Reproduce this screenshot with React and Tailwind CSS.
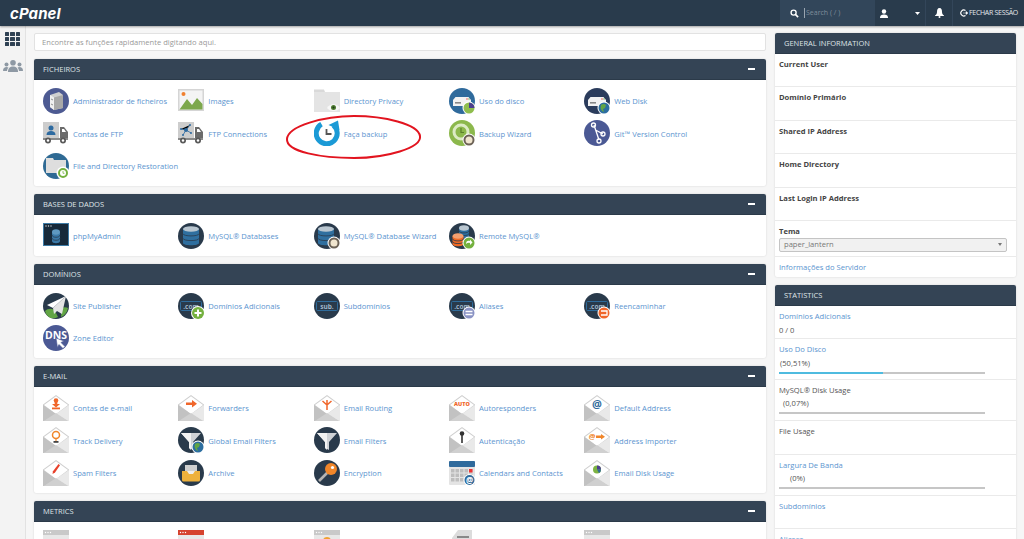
import React from "react";

const F = "font-['Open_Sans',sans-serif]";
const NAVY = "#293a4b";

const S = ({ children }) => (
  <svg viewBox="0 0 26 26" width="26" height="26" className="shrink-0 block">{children}</svg>
);
const C = ({ f }) => <circle cx="13" cy="13" r="13" fill={f} />;
const B = ({ f = "#fff", children, cx = 20, cy = 20, r = 5.5 }) => (
  <g>
    <circle cx={cx} cy={cy} r={r + 1} fill="#fff" />
    <circle cx={cx} cy={cy} r={r} fill={f} />
    {children}
  </g>
);

const Env = ({ children }) => (
  <S>
    <path d="M0 9.500 13 0l13 9.500V26H0Z" fill="#cfcfcf" />
    <path d="M1 10 13 1.200 25 10 13 19Z" fill="#fff" />
    <path d="M0 10 13 19 1 26H0Z" fill="#c2c2c2" />
    <path d="M26 10 13 19l12 7h1Z" fill="#e9e9e9" />
    <path d="M1 26 13 18l12 8Z" fill="#d0d0d0" />
    {children}
  </S>
);

const Server = ({ y = 9 }) => (
  <g>
    <path d={`M4 ${y + 3} 6.500 ${y}h13l2.500 3v6H4Z`} fill="#f2f2f2" />
    <rect x="6" y={y + 5} width="6" height="1.600" fill="#888" />
    <circle cx="18" cy={y + 2} r=".7" fill="#e33" />
    <circle cx="20" cy={y + 2} r=".7" fill="#6a4" />
  </g>
);

const Globe = () => (
  <g>
    <B f="#2c6ea0" />
    <path d="M17 17c2-1.500 4-1 5 0l-1 3-2 1 1 3-2-1-1.500-3Z" fill="#62a544" />
  </g>
);

const Db = ({ x = 13, y = 6, c = "#2f6f9f", top = "#b9c6d0", w = 8, h = 14 }) => (
  <g>
    <path d={`M${x - w} ${y}v${h}c0 3 ${2 * w} 3 ${2 * w} 0v-${h}Z`} fill={c} />
    <ellipse cx={x} cy={y} rx={w} ry="2.800" fill={top} />
    <path d={`M${x - w} ${y + h / 3}c0 3 ${2 * w} 3 ${2 * w} 0`} fill="none" stroke={NAVY} strokeWidth=".8" />
    <path d={`M${x - w} ${y + (2 * h) / 3}c0 3 ${2 * w} 3 ${2 * w} 0`} fill="none" stroke={NAVY} strokeWidth=".8" />
  </g>
);

const Truck = ({ children }) => (
  <S>
    <rect x="0" y="2" width="16" height="16" fill="#cdcdcd" />
    <path d="M17 7h4l4 5v7H17Z" fill="#6b6b6b" />
    <path d="M19 9h2l2 3h-4Z" fill="#fff" />
    <rect x="0" y="18" width="25" height="2" fill="#8a8a8a" />
    <circle cx="5" cy="20.500" r="3" fill="#5a5a5a" />
    <circle cx="5" cy="20.500" r="1.200" fill="#fff" />
    <circle cx="20" cy="20.500" r="3" fill="#5a5a5a" />
    <circle cx="20" cy="20.500" r="1.200" fill="#fff" />
    {children}
  </S>
);

const Com = ({ t = ".com", children, fs = 6.5 }) => (
  <S>
    <C f={NAVY} />
    <rect x="2.500" y="8.500" width="21" height="9" rx="1" fill="none" stroke="#2f6c9c" strokeWidth="1" />
    <text x="13" y="15.500" textAnchor="middle" fontSize={fs} fontWeight="700" fill="#9fb6c9" fontFamily="Open Sans, sans-serif">{t}</text>
    {children}
  </S>
);

const Funnel = ({ children }) => (
  <>
    <path d="M3 6h20l-8 9v8l-4-2v-6Z" fill="#cfd2d6" />
    <path d="M3 6h10v17l-2-2v-6Z" fill="#f2f2f2" />
    {children}
  </>
);

const Win = ({ f = "#c9c9c9", children }) => (
  <S>
    <rect width="26" height="24" y="0" rx="1" fill="#e8e8e8" />
    <rect width="26" height="5" fill={f} />
    <circle cx="2.500" cy="2.500" r=".7" fill="#fff" />
    <circle cx="5" cy="2.500" r=".7" fill="#fff" />
    <circle cx="7.500" cy="2.500" r=".7" fill="#fff" />
    {children}
  </S>
);

const I = {
  file: (
    <S>
      <C f="#4d5a92" />
      <path d="M7 7 16 4l4 3v13l-9 2-4-3Z" fill="#cfcfcf" />
      <path d="M7 7l4 2.500V22l-4-3Z" fill="#f0f0f0" />
      <path d="M11 9.500 20 7v13l-9 2Z" fill="#a8a8a8" />
      <path d="M8 11l2 1M8 16l2 1" stroke="#777" strokeWidth=".8" />
    </S>
  ),
  images: (
    <S>
      <rect y="1" width="26" height="22" fill="#d5d5d5" />
      <rect x="1.500" y="2.500" width="23" height="19" fill="#f4f4f4" />
      <circle cx="5.500" cy="6" r="2" fill="#f08030" />
      <path d="M1.500 21.500 9 11l5 6 5-7 5.500 6v5.500Z" fill="#7da84c" />
    </S>
  ),
  privacy: (
    <S>
      <path d="M0 5V1.500h10L11 4h15v20H0Z" fill="#d9d9d9" />
      <path d="M0 4h26v20H0Z" fill="#e4e4e4" />
      <path d="M13 20c3-5 10-5 13 0-3 4-10 4-13 0Z" fill="#f7f7f7" />
      <circle cx="19.500" cy="19.500" r="2.500" fill="#4c7a30" />
      <circle cx="19.500" cy="19.500" r="1" fill="#1e3a16" />
    </S>
  ),
  disk: (
    <S>
      <C f="#2f6a9c" />
      <Server />
      <B f="#8fbd4d"><path d="M20 20v-5.500a5.500 5.500 0 0 1 5.500 5.500Z" fill="#4d3f8f" /></B>
    </S>
  ),
  webdisk: (
    <S>
      <C f="#2b3c5c" />
      <Server />
      <Globe />
    </S>
  ),
  ftp: (
    <Truck>
      <circle cx="8" cy="8" r="2.500" fill="#2d6aa0" />
      <path d="M3.500 15c0-3 2-4 4.500-4s4.500 1 4.500 4Z" fill="#2d6aa0" />
    </Truck>
  ),
  conn: (
    <Truck>
      <g stroke="#2d6aa0" strokeWidth=".8">
        <path d="M3 9l5 1 4-5M8 10l-3 5M8 10l5 3" />
      </g>
      <g fill="#2d6aa0">
        <circle cx="8" cy="10" r="2" />
        <circle cx="3" cy="9" r="1" />
        <circle cx="12" cy="5" r="1" />
        <circle cx="5" cy="15" r="1" />
        <circle cx="13" cy="13" r="1" />
      </g>
    </Truck>
  ),
  backup: (
    <S>
      <path d="M19.500 5.300A10.500 10.500 0 1 1 7.500 4.200" fill="none" stroke="#1b9ad6" strokeWidth="5" />
      <path d="M14.500 5 24 0.500l1.500 9.500Z" fill="#1b9ad6" />
      <path d="M12.500 9v5h5" fill="none" stroke="#555" strokeWidth="1.800" />
    </S>
  ),
  wizard: (
    <S>
      <C f="#8cb84c" />
      <circle cx="12" cy="12" r="7" fill="none" stroke="#dcebc4" strokeWidth="3" />
      <path d="M12 8v4.500h3" fill="none" stroke="#5a7f2a" strokeWidth="1.200" />
      <B f="#6c6256"><circle cx="20" cy="20" r="3.500" fill="#f1e6cf" /></B>
    </S>
  ),
  git: (
    <S>
      <C f="#4b5994" />
      <path d="M10 5 15 20M11.500 10 19 14" stroke="#fff" strokeWidth="1.300" fill="none" />
      <circle cx="9.500" cy="5" r="2" fill="none" stroke="#fff" strokeWidth="1.300" />
      <circle cx="19" cy="14" r="2" fill="none" stroke="#fff" strokeWidth="1.300" />
      <circle cx="15" cy="21" r="2" fill="none" stroke="#fff" strokeWidth="1.300" />
    </S>
  ),
  restore: (
    <S>
      <C f="#2f6a94" />
      <path d="M3 7V5h7l1 2h12v13H3Z" fill="#dedede" />
      <B f="#fff"><circle cx="20" cy="20" r="4" fill="none" stroke="#74b13f" strokeWidth="2" /><path d="M20 18v2.300h1.500" stroke="#74b13f" strokeWidth=".8" fill="none" /></B>
    </S>
  ),
  php: (
    <S>
      <rect y="0" width="26" height="23" fill="#3d7ba6" />
      <rect x="1" y="1" width="24" height="21" fill="#16293a" />
      <circle cx="3" cy="3" r=".7" fill="#ddd" />
      <circle cx="5.500" cy="3" r=".7" fill="#ddd" />
      <circle cx="8" cy="3" r=".7" fill="#ddd" />
      <Db x={13} y={9} w={4} h={9} c="#3a79a8" top="#5f99c1" />
    </S>
  ),
  mysql: (
    <S>
      <C f={NAVY} />
      <Db />
    </S>
  ),
  mysqlw: (
    <S>
      <C f={NAVY} />
      <Db x={12} />
      <B f="#6c6256"><circle cx="20" cy="20" r="3.500" fill="#f1e6cf" /></B>
    </S>
  ),
  remote: (
    <S>
      <C f={NAVY} />
      <Db x={15} y={5} w={5} h={8} />
      <Db x={9} y={13} w={5.500} h={8} c="#ef6a25" top="#f4a070" />
      <B f="#74b13f"><path d="M17 21c0-3 2-4 4-3v-1.500l2.500 3-2.500 2.500v-2c-1.500-.5-3 0-4 1Z" fill="#fff" /></B>
    </S>
  ),
  site: (
    <S>
      <C f={NAVY} />
      <path d="M2 18c3-3 8-3 10 0l3 6c-5 3-11 1-13-6ZM19 15c2-1 4-1 6 0-1 5-4 8-7 9Z" fill="#62a544" />
      <path d="M23 3 4 12l6 3Z" fill="#fff" />
      <path d="M23 3 10 15l1 6 3-3 5 3Z" fill="#e4e4e4" />
    </S>
  ),
  addon: (
    <Com>
      <B f="#74b13f" r={6}><path d="M20 16.500v7M16.500 20h7" stroke="#fff" strokeWidth="2" /></B>
    </Com>
  ),
  sub: <Com t="sub." />,
  alias: (
    <Com>
      <B f="#8a93c4"><path d="M16.500 18.500h7M16.500 21.500h7" stroke="#fff" strokeWidth="1.500" /></B>
    </Com>
  ),
  redirect: (
    <Com>
      <B f="#f0662a"><path d="M17 18h6v4h-6" fill="none" stroke="#fff" strokeWidth="1.300" /></B>
    </Com>
  ),
  dns: (
    <S>
      <C f="#4b5994" />
      <text x="13" y="14" textAnchor="middle" fontSize="10.500" fontWeight="700" fill="#fff" fontFamily="Open Sans, sans-serif">DNS</text>
      <path d="M13 13l8 3-3 1.500 4 4-2 2-4-4-1.500 3Z" fill="#fff" stroke="#4b5994" strokeWidth=".6" />
    </S>
  ),
  emailAcc: (
    <Env>
      <circle cx="13" cy="5.500" r="2.300" fill="#f0662a" />
      <path d="M11.700 7h2.600v2h2.700L13 12.500 9 9h2.700Z" fill="#f0662a" />
      <rect x="9" y="12.500" width="8" height="1.800" fill="#f0662a" />
    </Env>
  ),
  fwd: (
    <Env>
      <path d="M8 7.500h6V5l5 3.800-5 3.800V10H8Z" fill="#f0662a" />
    </Env>
  ),
  route: (
    <Env>
      <path d="M13 15V5M13 10 8.500 6M13 10l4.500-4" stroke="#f0662a" strokeWidth="1.500" fill="none" />
    </Env>
  ),
  auto: (
    <Env>
      <text x="13" y="11" textAnchor="middle" fontSize="5.500" fontWeight="800" fill="#f0662a" fontFamily="Open Sans, sans-serif">AUTO</text>
    </Env>
  ),
  def: (
    <Env>
      <text x="13" y="13" textAnchor="middle" fontSize="11" fontWeight="700" fill="#2f6a9c" fontFamily="Open Sans, sans-serif">@</text>
    </Env>
  ),
  track: (
    <Env>
      <circle cx="13" cy="8" r="3.500" fill="#fff" stroke="#f0862a" strokeWidth="1.500" />
      <path d="M13 11.500V15" stroke="#f0862a" strokeWidth="1.200" />
      <rect x="10.500" y="14" width="5" height="1.800" fill="#444" />
    </Env>
  ),
  gfilter: (
    <S>
      <C f={NAVY} />
      <Funnel />
      <Globe />
    </S>
  ),
  filter: (
    <S>
      <C f={NAVY} />
      <Funnel />
    </S>
  ),
  auth: (
    <Env>
      <circle cx="13" cy="6.500" r="2.300" fill="#333" />
      <rect x="12.200" y="7" width="1.600" height="9" fill="#333" />
    </Env>
  ),
  importer: (
    <Env>
      <text x="8" y="12" textAnchor="middle" fontSize="7.500" fontWeight="700" fill="#f0862a" fontFamily="Open Sans, sans-serif">@</text>
      <path d="M12 8.500h5V7l4 2.800-4 2.800V11h-5Z" fill="#f0862a" />
    </Env>
  ),
  spam: (
    <Env>
      <path d="M15.500 4 17 5.200 12 12.500l-2.500 1.500.5-2.800Z" fill="#e8402a" />
    </Env>
  ),
  archive: (
    <S>
      <C f={NAVY} />
      <path d="M7 5h12v7H7Z" fill="#cfcfcf" />
      <path d="M4 11h18v9a1.500 1.500 0 0 1-1.500 1.500h-15A1.500 1.500 0 0 1 4 20Z" fill="#eeb13c" />
      <path d="M9 11l2 3h4l2-3Z" fill="#eee" />
    </S>
  ),
  enc: (
    <S>
      <C f={NAVY} />
      <path d="M5 21 14 12" stroke="#b3b3b3" strokeWidth="2.600" />
      <circle cx="17" cy="9" r="6" fill="#f0862a" />
      <circle cx="18.500" cy="7.500" r="1.600" fill="#fff" />
    </S>
  ),
  cal: (
    <S>
      <rect y="1" width="26" height="24" rx="1" fill="#e4e4e4" />
      <rect y="1" width="26" height="6" rx="1" fill="#2f6a9c" />
      <g fill="#bdbdbd">
        {[9, 13.500, 18].map((y) =>
          [2, 6.500, 11, 15.500, 20].map((x) => <rect key={`${x}-${y}`} x={x} y={y} width="3.500" height="3.500" />)
        )}
      </g>
      <rect x="20" y="9" width="3.500" height="3.500" fill="#e33" />
      <B f="#2f6a9c" cx={20.500} cy={20} r={5}>
        <text x="20.500" y="23" textAnchor="middle" fontSize="8" fontWeight="700" fill="#fff" fontFamily="Open Sans, sans-serif">@</text>
      </B>
    </S>
  ),
  edisk: (
    <Env>
      <circle cx="13" cy="9.500" r="4" fill="#7db343" />
      <path d="M13 9.500V5.500a4 4 0 0 1 4 4Z" fill="#4d3f8f" />
      <path d="M13 9.500h4a4 4 0 0 1-2 3.500Z" fill="#2f6a9c" />
    </Env>
  ),
  m1: <Win />,
  m2: <Win f="#d6432f" />,
  m3: <Win><circle cx="13" cy="11" r="4" fill="#f0a030" /></Win>,
  m4: (
    <S>
      <path d="M3 8 9 0h14v24H3Z" fill="#dcdcdc" />
      <rect x="8" y="6" width="12" height="2" fill="#888" />
    </S>
  ),
  m5: <Win />,
};

const panels = [
  ["FICHEIROS", [
    ["file", "Administrador de ficheiros"], ["images", "Images"], ["privacy", "Directory Privacy"], ["disk", "Uso do disco"], ["webdisk", "Web Disk"],
    ["ftp", "Contas de FTP"], ["conn", "FTP Connections"], ["backup", "Faça backup"], ["wizard", "Backup Wizard"], ["git", "Git™ Version Control"],
    ["restore", "File and Directory Restoration"],
  ]],
  ["BASES DE DADOS", [["php", "phpMyAdmin"], ["mysql", "MySQL® Databases"], ["mysqlw", "MySQL® Database Wizard"], ["remote", "Remote MySQL®"]]],
  ["DOMÍNIOS", [
    ["site", "Site Publisher"], ["addon", "Domínios Adicionais"], ["sub", "Subdomínios"], ["alias", "Aliases"], ["redirect", "Reencaminhar"],
    ["dns", "Zone Editor"],
  ]],
  ["E-MAIL", [
    ["emailAcc", "Contas de e-mail"], ["fwd", "Forwarders"], ["route", "Email Routing"], ["auto", "Autoresponders"], ["def", "Default Address"],
    ["track", "Track Delivery"], ["gfilter", "Global Email Filters"], ["filter", "Email Filters"], ["auth", "Autenticação"], ["importer", "Address Importer"],
    ["spam", "Spam Filters"], ["archive", "Archive"], ["enc", "Encryption"], ["cal", "Calendars and Contacts"], ["edisk", "Email Disk Usage"],
  ]],
  ["METRICS", [["m1", ""], ["m2", ""], ["m3", ""], ["m4", ""], ["m5", ""]]],
];

const Header = ({ title, minus }) => (
  <div className="h-[21px] bg-[#344455] border-b border-[#2b3a49] rounded-t-[2px] flex items-center justify-between pl-[9px] pr-[11px] text-[7.5px] text-[#dfe3e6]">
    <span className="pt-[2px]">{title}</span>
    {minus && <span className="w-[7px] h-[2px] bg-white" />}
  </div>
);

const Panel = ({ title, items }) => (
  <section className="shrink-0 bg-white rounded-[2px] shadow-[0_0_2px_rgba(0,0,0,0.15)]">
    <Header title={title} minus />
    <div className="grid grid-cols-[repeat(5,135.33px)] auto-rows-[26px] gap-y-[6.33px] pl-[9px] pt-[8px] pb-[7px]">
      {items.map(([k, t]) => (
        <a key={k} className="flex items-center gap-[4px] text-[#5b94cf] text-[7.6px] whitespace-nowrap">
          {I[k]}
          {t && <span className="pt-[2px]">{t}</span>}
        </a>
      ))}
    </div>
  </section>
);

const Row = ({ h = "h-[33.4px]", children, last }) => (
  <div className={`${h} px-[4px] pt-[4px] ${last ? "" : "border-b border-[#eaeaea]"}`}>{children}</div>
);

const Bar = ({ pct = 0 }) => (
  <div className="mt-[3px] w-[206px] h-[2px] bg-[#c6c6c6]">
    <div className="h-full bg-[#4fbbdf]" style={{ width: `${pct}%` }} />
  </div>
);

const Lbl = ({ children }) => <div className="text-[7.6px] font-bold text-[#444] leading-[12px]">{children}</div>;
const Lnk = ({ children }) => <div className="text-[7.6px] text-[#5b94cf] leading-[12px]">{children}</div>;
const Dim = ({ children, className = "" }) => <div className={`text-[7.6px] text-[#555] leading-[12px] ${className}`}>{children}</div>;

export default function App() {
  return (
    <div className={`${F} relative h-[539px] w-[1024px] overflow-hidden bg-[#f6f6f6] flex flex-col`}>
      <header className="h-[26px] shrink-0 bg-[#293b4c] shadow-[0_1px_2px_rgba(0,0,0,0.35)] z-10 flex items-center text-white">
        <div className="pl-[10px] text-[15px] leading-none font-bold italic tracking-[0.1px] text-white font-['Inter',sans-serif]">cPanel</div>
        <div className="ml-auto flex h-full items-center">
          <div className="w-[95px] h-full bg-[#32465a] flex items-center pl-[10px] gap-[5px] text-[#7f8d9a] text-[7px]">
            <svg width="9" height="9" viewBox="0 0 10 10"><circle cx="4" cy="4" r="2.800" fill="none" stroke="#fff" strokeWidth="1.500" /><path d="M6 6l3 3" stroke="#fff" strokeWidth="1.800" /></svg>
            <span className="border-l border-[#9aa5b0] pl-[1px]">Search ( / )</span>
          </div>
          <div className="w-[51px] h-full flex items-center pl-[5px] border-r border-[#33465a]">
            <svg width="8" height="9" viewBox="0 0 8 9"><circle cx="4" cy="2.500" r="2.200" fill="#fff" /><path d="M0 9c0-3 2-3.500 4-3.500S8 6 8 9Z" fill="#fff" /></svg>
            <svg className="ml-[27px]" width="5" height="3" viewBox="0 0 5 3"><path d="M0 0h5L2.500 3Z" fill="#fff" /></svg>
          </div>
          <div className="w-[27px] h-full flex items-center justify-center border-r border-[#33465a]">
            <svg width="9" height="10" viewBox="0 0 9 10"><path d="M4.500 0C2.500 0 2 2 2 4c0 2-1 3-2 3.500V8h9v-.5C8 7 7 6 7 4c0-2-.5-4-2.500-4Z" fill="#fff" /><circle cx="4.500" cy="9" r="1" fill="#fff" /></svg>
          </div>
          <div className="w-[71px] h-full flex items-center pl-[7px] gap-[1px] text-[7px] tracking-[-0.3px] text-[#e6e9ec]">
            <svg width="8" height="8" viewBox="0 0 8 8"><path d="M5.500 1.500A3 3 0 1 0 5.500 6.500" fill="none" stroke="#fff" strokeWidth="1.200" /><path d="M3 4h3V2.500L8 4 6 5.500V4" fill="#fff" stroke="#fff" strokeWidth=".5" /></svg>
            <span className="whitespace-nowrap">FECHAR SESSÃO</span>
          </div>
        </div>
      </header>

      <div className="flex-1 flex min-h-0">
        <aside className="w-[26px] shrink-0 bg-[#f3f3f3] border-r border-[#e2e2e2] flex flex-col items-center pt-[6px] gap-[14px]">
          <div className="grid grid-cols-3 gap-[1px] w-[15px]">
            {Array.from({ length: 9 }).map((_, i) => (
              <span key={i} className="h-[4px] bg-[#2f4153] rounded-[0.5px]" />
            ))}
          </div>
          <svg width="20" height="12" viewBox="0 0 20 12" fill="#8e99a4">
            <circle cx="10" cy="2.800" r="2.800" />
            <path d="M5 12c0-4 2-5.500 5-5.500s5 1.500 5 5.500Z" />
            <circle cx="3.500" cy="4.500" r="2" />
            <path d="M0 11c0-3 1.500-4 3.500-4 .8 0 1.500.2 2 .5C4.700 8.500 4 10 4 11Z" />
            <circle cx="16.500" cy="4.500" r="2" />
            <path d="M20 11c0-3-1.500-4-3.500-4-.8 0-1.500.2-2 .5.8 1 1.500 2.500 1.500 3.500Z" />
          </svg>
        </aside>

        <main className="w-[732px] ml-[8px] pt-[7px] shrink-0 flex flex-col gap-[8px]">
          <div className="h-[18px] shrink-0 bg-white border border-[#e2e2e2] rounded-[2px] flex items-center pl-[7px] pt-[2px] text-[7.6px] text-[#999]">
            Encontre as funções rapidamente digitando aqui.
          </div>
          {panels.map(([t, items]) => (
            <Panel key={t} title={t} items={items} />
          ))}
        </main>

        <aside className="w-[241px] ml-[9px] pt-[7px] shrink-0 flex flex-col gap-[8px]">
          <section className="shrink-0 bg-white rounded-[2px] shadow-[0_0_2px_rgba(0,0,0,0.15)]">
            <Header title="GENERAL INFORMATION" />
            <Row><Lbl>Current User</Lbl></Row>
            <Row><Lbl>Domínio Primário</Lbl></Row>
            <Row><Lbl>Shared IP Address</Lbl></Row>
            <Row><Lbl>Home Directory</Lbl></Row>
            <Row><Lbl>Last Login IP Address</Lbl></Row>
            <Row h="h-[36px]">
              <Lbl>Tema</Lbl>
              <div className="mt-[1px] h-[14px] w-[228px] rounded-[2px] border border-[#c4c4c4] bg-[#f1f1f1] flex items-center justify-between px-[4px] text-[7.6px] text-[#777]">
                <span>paper_lantern</span>
                <span className="w-0 h-0 border-x-[2px] border-x-transparent border-t-[3px] border-t-[#777]" />
              </div>
            </Row>
            <Row h="h-[20px]" last><Lnk>Informações do Servidor</Lnk></Row>
          </section>

          <section className="shrink-0 bg-white rounded-t-[2px] shadow-[0_0_2px_rgba(0,0,0,0.15)]">
            <Header title="STATISTICS" />
            <Row><Lnk>Domínios Adicionais</Lnk><Dim className="mt-[2px]">0 / 0</Dim></Row>
            <Row h="h-[41px]"><Lnk>Uso Do Disco</Lnk><Dim className="mt-[2px] pl-[1px]">(50,51%)</Dim><Bar pct={50.51} /></Row>
            <Row h="h-[41px]"><Dim>MySQL® Disk Usage</Dim><Dim className="mt-[1px] pl-[4px]">(0,07%)</Dim><Bar /></Row>
            <Row><Dim>File Usage</Dim></Row>
            <Row h="h-[41px]"><Lnk>Largura De Banda</Lnk><Dim className="mt-[1px] pl-[11px]">(0%)</Dim><Bar /></Row>
            <Row><Lnk>Subdomínios</Lnk></Row>
            <Row h="h-[33px]" last><Lnk>Aliases</Lnk></Row>
          </section>
        </aside>
      </div>

      <svg className="absolute left-[284px] top-[112px] pointer-events-none" width="140" height="50" viewBox="0 0 140 50">
        <path d="M3 27C4 14 40 4 70 4c30 0 64 8 66 20 2 12-34 22-66 22C38 46 2 40 3 27Z" fill="none" stroke="#e2141f" strokeWidth="2" />
      </svg>
    </div>
  );
}
